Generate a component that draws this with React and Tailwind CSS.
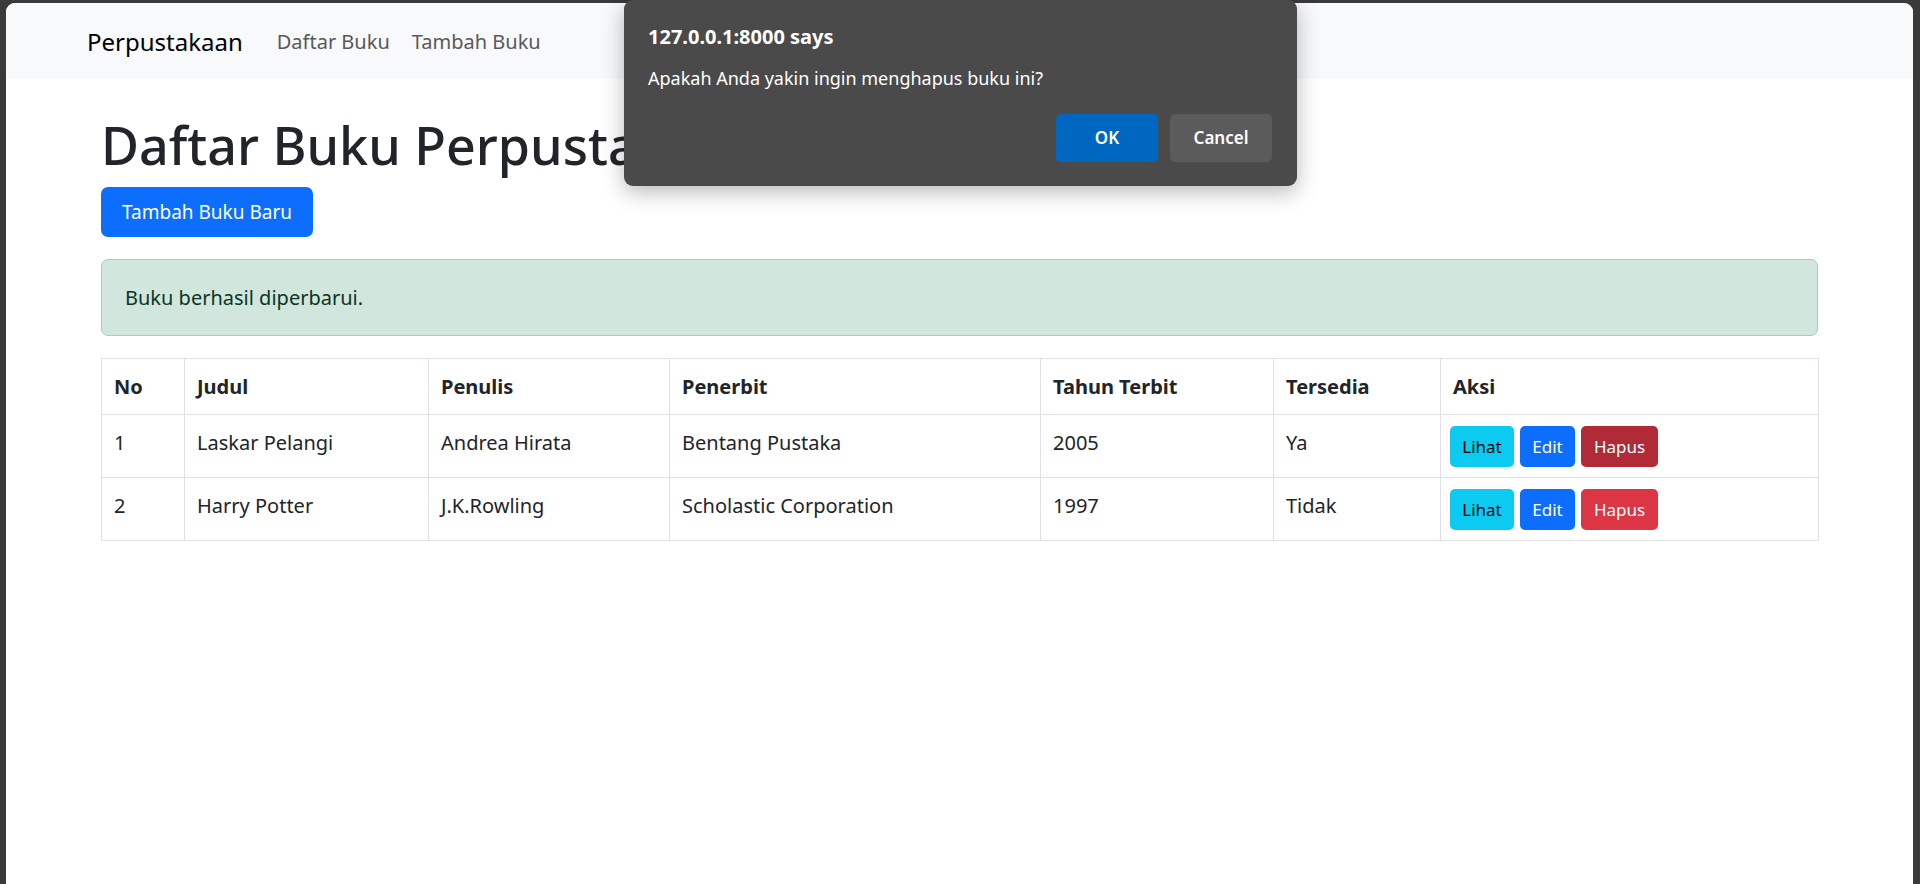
import React from 'react';

const books = [
  { no: 1, judul: 'Laskar Pelangi', penulis: 'Andrea Hirata', penerbit: 'Bentang Pustaka', tahun: 2005, tersedia: 'Ya', hover: true },
  { no: 2, judul: 'Harry Potter', penulis: 'J.K.Rowling', penerbit: 'Scholastic Corporation', tahun: 1997, tersedia: 'Tidak', hover: false },
];

const font = { fontFamily: '"Noto Sans", "Open Sans", sans-serif' };

function ConfirmDialog() {
  return (
    <div className="absolute left-[624px] top-0 w-[673px] h-[186px] bg-[#4a4a4a] rounded-[9px] shadow-[0_6px_22px_rgba(0,0,0,0.28)] px-[24px] pt-[20px] text-white">
      <div className="text-[20px] font-bold leading-[34px]">127.0.0.1:8000 says</div>
      <div className="text-[18px] leading-[24px] mt-[12px]">Apakah Anda yakin ingin menghapus buku ini?</div>
      <div className="flex justify-end gap-[12px] mt-[24px] pr-[1px]">
        <button className="w-[102px] h-[48px] rounded-[5px] bg-[#0067c0] text-[17px] font-semibold">OK</button>
        <button className="w-[102px] h-[48px] rounded-[5px] bg-[#5b5b5b] text-[17px] font-semibold">Cancel</button>
      </div>
    </div>
  );
}

function ActionButtons({ hover }) {
  return (
    <div className="flex gap-[6px]">
      <button className="w-[64px] h-[41px] rounded-[5px] bg-[#0dcaf0] text-black text-[17px]">Lihat</button>
      <button className="w-[55px] h-[41px] rounded-[5px] bg-[#0d6efd] text-white text-[17px]">Edit</button>
      <button className={hover ? 'w-[77px] h-[41px] rounded-[5px] bg-[#b02a37] text-white text-[17px]' : 'w-[77px] h-[41px] rounded-[5px] bg-[#dc3545] text-white text-[17px]'}>
        Hapus
      </button>
    </div>
  );
}

export default function App() {
  const th = 'border border-[#dee2e6] px-[12px] pt-[13px] pb-[12px] text-left font-bold leading-[30px] align-top';
  const td = 'border border-[#dee2e6] px-[12px] pt-[13px] pb-[10px] leading-[30px] align-top';

  return (
    <div className="relative w-[1920px] h-[884px] bg-[#3a3a3a] pt-[3px] pl-[6px] pr-[7px] overflow-hidden" style={font}>
      <div className="h-full bg-white rounded-t-[9px] overflow-hidden text-[#212529] text-[20px]">
        {/* Navbar */}
        <nav className="h-[76px] bg-[#f8f9fa] flex items-center pl-[81px] pt-[2px]">
          <span className="text-[24px] text-black mr-[34px]">Perpustakaan</span>
          <div className="flex gap-[22px] text-[20px] text-[#595959]">
            <span>Daftar Buku</span>
            <span>Tambah Buku</span>
          </div>
        </nav>

        <main className="px-[95px] pt-[30px]">
          <h1 className="text-[52px] font-medium leading-[72px]">Daftar Buku Perpustakaan</h1>
          <button className="mt-[6px] h-[50px] px-[21px] rounded-[7px] bg-[#0d6efd] text-white text-[19px]">
            Tambah Buku Baru
          </button>

          <div className="mt-[22px] h-[77px] flex items-center px-[23px] bg-[#d1e7dd] border border-[#a3cfbb] rounded-[7px] text-[#0a3622] text-[20px]">
            Buku berhasil diperbarui.
          </div>

          <table className="mt-[22px] w-full table-fixed border-collapse text-[20px]">
            <colgroup>
              <col className="w-[83px]" />
              <col className="w-[244px]" />
              <col className="w-[241px]" />
              <col className="w-[371px]" />
              <col className="w-[233px]" />
              <col className="w-[167px]" />
              <col className="w-[378px]" />
            </colgroup>
            <thead>
              <tr>
                <th className={th}>No</th>
                <th className={th}>Judul</th>
                <th className={th}>Penulis</th>
                <th className={th}>Penerbit</th>
                <th className={th}>Tahun Terbit</th>
                <th className={th}>Tersedia</th>
                <th className={th}>Aksi</th>
              </tr>
            </thead>
            <tbody>
              {books.map((b) => (
                <tr key={b.no}>
                  <td className={td}>{b.no}</td>
                  <td className={td}>{b.judul}</td>
                  <td className={td}>{b.penulis}</td>
                  <td className={td}>{b.penerbit}</td>
                  <td className={td}>{b.tahun}</td>
                  <td className={td}>{b.tersedia}</td>
                  <td className="border border-[#dee2e6] px-[9px] pt-[11px] pb-[10px] align-top">
                    <ActionButtons hover={b.hover} />
                  </td>
                </tr>
              ))}
            </tbody>
          </table>
        </main>
      </div>

      <ConfirmDialog />
    </div>
  );
}
